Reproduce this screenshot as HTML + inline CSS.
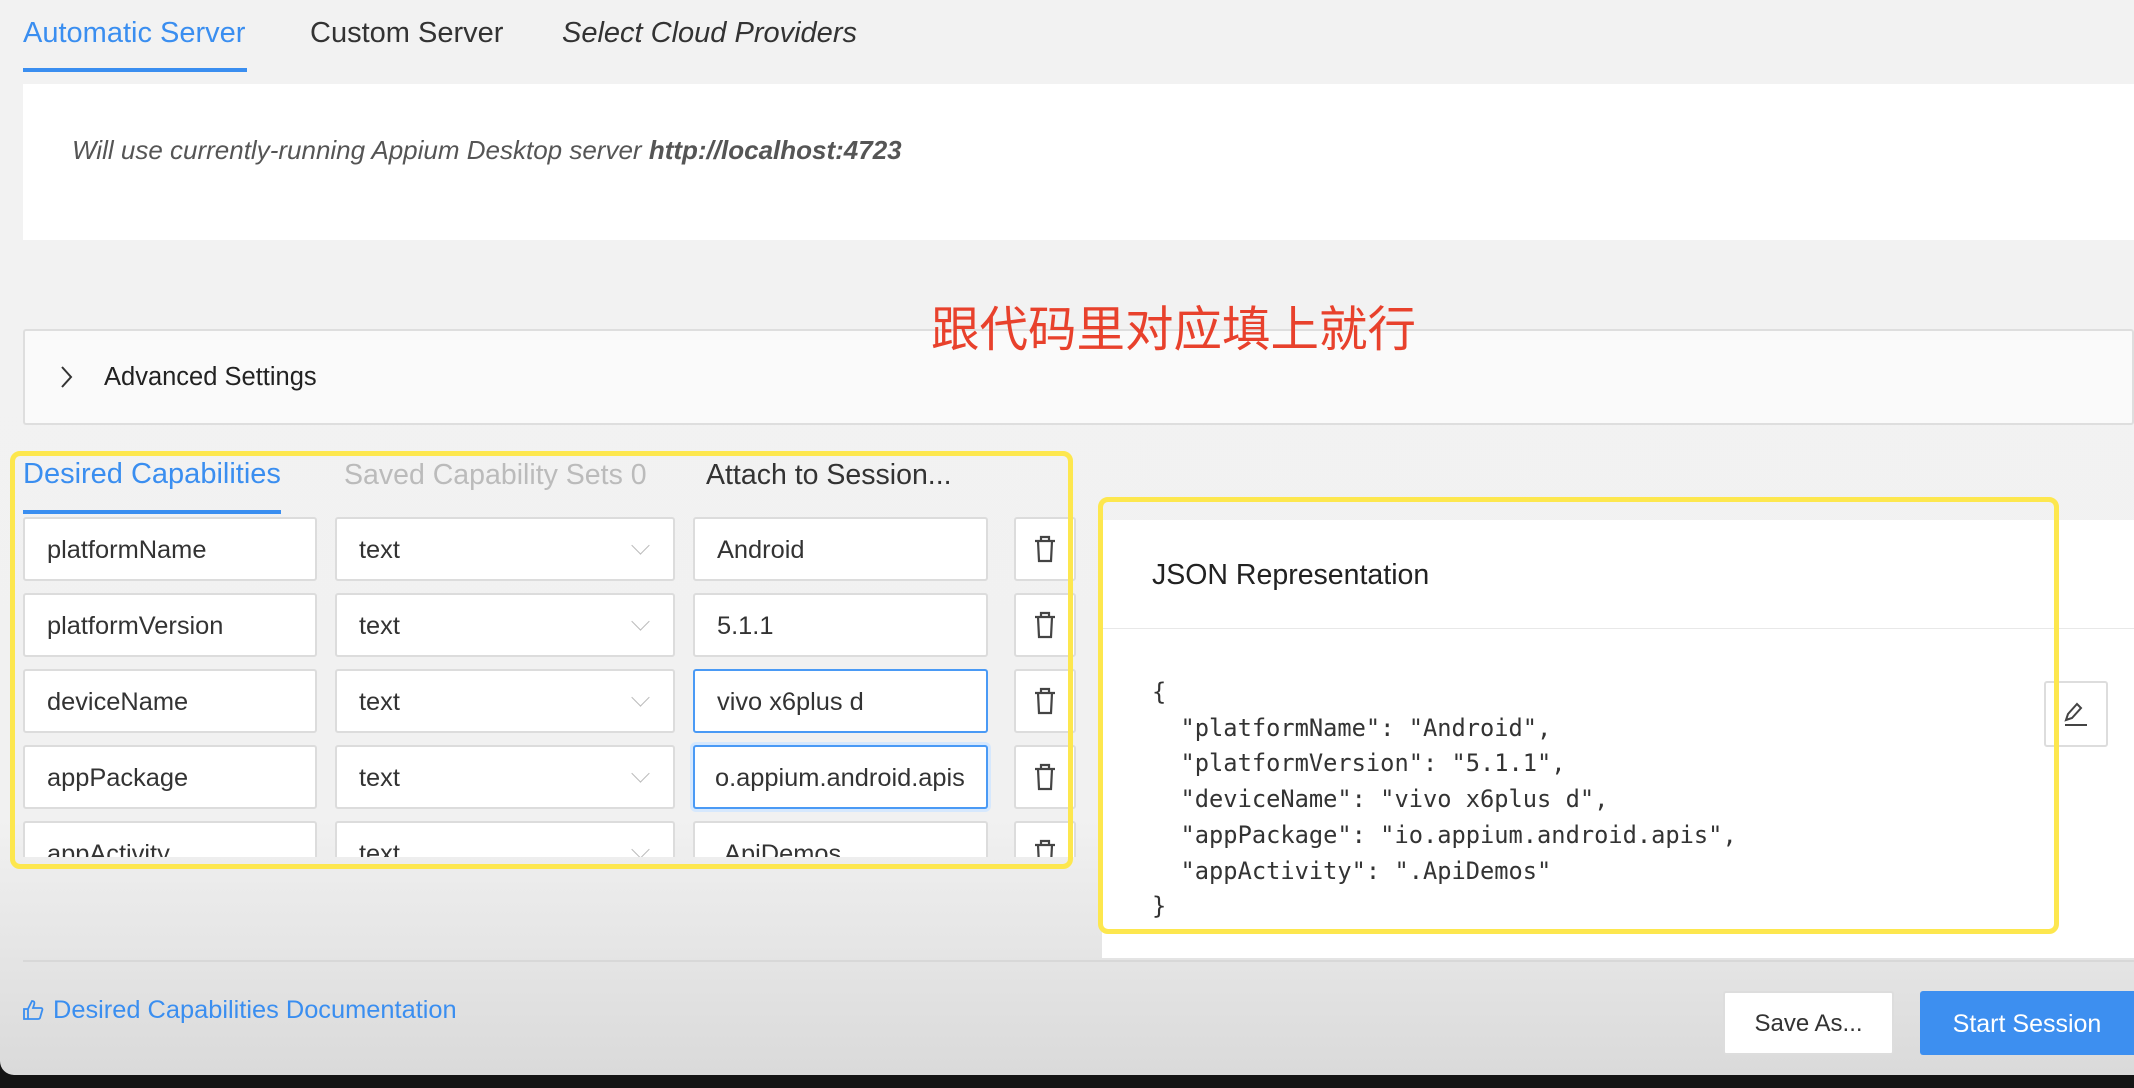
<!DOCTYPE html>
<html><head><meta charset="utf-8">
<style>
*{box-sizing:border-box;margin:0;padding:0}
body{width:2134px;height:1088px;overflow:hidden;background:#141414;font-family:"Liberation Sans","Noto Sans CJK SC",sans-serif;position:relative}
.app{position:absolute;left:0;top:0;width:2134px;height:1075px;background:linear-gradient(#f2f2f2 0,#f1f1f1 820px,#dadada 1075px);border-bottom-left-radius:14px;overflow:hidden}
.a{position:absolute;white-space:nowrap}
.tab{font-size:29px;color:#333;top:17px}
.box{position:absolute;background:#fff;border:1px solid #e4e4e4}
.inp{position:absolute;background:#fff;border:2px solid #dcdcdc;border-radius:3px;height:64px;font-size:25.4px;color:#333;padding-left:22px;line-height:62px;overflow:hidden;white-space:nowrap}
.sel::after{content:"";position:absolute;right:26px;top:20px;width:12px;height:12px;border-right:1.5px solid #bbb;border-bottom:1.5px solid #bbb;transform:rotate(45deg)}
.foc{border-color:#4a9af5}
.yel{position:absolute;border:5px solid #fde74e;border-radius:10px}
.code{font-family:"DejaVu Sans Mono","Liberation Mono",monospace;font-size:23.7px;color:#333;line-height:35.7px;white-space:pre}
</style></head><body>
<div class="app">
<div class="a tab" style="left:23px;color:#3a8ef0">Automatic Server</div>
<div style="position:absolute;left:23px;top:68px;width:224px;height:4px;background:#3a8ef0"></div>
<div class="a tab" style="left:310px">Custom Server</div>
<div class="a tab" style="left:562px;font-style:italic">Select Cloud Providers</div>
<div class="box" style="left:23px;top:84px;width:2111px;height:156px;border:none"></div>
<div class="a" style="left:72px;top:135px;font-size:26px;font-style:italic;color:#555">Will use currently-running Appium Desktop server <b>http://localhost:4723</b></div>
<div class="box" style="left:23px;top:329px;width:2111px;height:96px;background:#fafafa;border:2px solid #dedede;border-radius:3px"></div>
<svg style="position:absolute;left:60px;top:365px" width="14" height="24"><path d="M2 2 L11 12 L2 22" fill="none" stroke="#333" stroke-width="2"/></svg>
<div class="a" style="left:104px;top:363px;font-size:25.5px;color:#222">Advanced Settings</div>
<div class="a" style="left:931px;top:290px;font-size:48.5px;color:#e8412c;font-family:'Noto Sans CJK SC',sans-serif">跟代码里对应填上就行</div>

<div class="a" style="left:23px;top:458px;font-size:29px;color:#3a8ef0">Desired Capabilities</div>
<div style="position:absolute;left:23px;top:510px;width:258px;height:4px;background:#3a8ef0"></div>
<div class="a" style="left:344px;top:459px;font-size:28.5px;color:#bbb">Saved Capability Sets 0</div>
<div class="a" style="left:706px;top:459px;font-size:28.5px;color:#333">Attach to Session...</div>

<div style="position:absolute;left:0;top:517px;width:1090px;height:340px;overflow:hidden">
<div class="inp" style="left:23px;top:0;width:294px">platformName</div>
<div class="inp sel" style="left:335px;top:0;width:340px">text</div>
<div class="inp" style="left:693px;top:0;width:295px">Android</div>
<div class="inp" style="left:23px;top:76px;width:294px">platformVersion</div>
<div class="inp sel" style="left:335px;top:76px;width:340px">text</div>
<div class="inp" style="left:693px;top:76px;width:295px">5.1.1</div>
<div class="inp" style="left:23px;top:152px;width:294px">deviceName</div>
<div class="inp sel" style="left:335px;top:152px;width:340px">text</div>
<div class="inp foc" style="left:693px;top:152px;width:295px">vivo x6plus d</div>
<div class="inp" style="left:23px;top:228px;width:294px">appPackage</div>
<div class="inp sel" style="left:335px;top:228px;width:340px">text</div>
<div class="inp foc" style="left:693px;top:228px;width:295px;padding-left:20px;box-shadow:0 0 0 3px #d6e8fd">o.appium.android.apis</div>
<div class="inp" style="left:23px;top:304px;width:294px">appActivity</div>
<div class="inp sel" style="left:335px;top:304px;width:340px">text</div>
<div class="inp" style="left:693px;top:304px;width:295px">.ApiDemos</div>
<div class="inp" style="left:1014px;top:0;width:62px"></div>
<div class="inp" style="left:1014px;top:76px;width:62px"></div>
<div class="inp" style="left:1014px;top:152px;width:62px"></div>
<div class="inp" style="left:1014px;top:228px;width:62px"></div>
<div class="inp" style="left:1014px;top:304px;width:62px"></div>
<svg style="position:absolute;left:1032px;top:18px" width="26" height="330"><g fill="none" stroke="#444" stroke-width="2.2">
<path d="M3 6H23M9 6V2H17V6M6 6L7 26H19L20 6"/>
<path transform="translate(0,76)" d="M3 6H23M9 6V2H17V6M6 6L7 26H19L20 6"/>
<path transform="translate(0,152)" d="M3 6H23M9 6V2H17V6M6 6L7 26H19L20 6"/>
<path transform="translate(0,228)" d="M3 6H23M9 6V2H17V6M6 6L7 26H19L20 6"/>
<path transform="translate(0,304)" d="M3 6H23M9 6V2H17V6M6 6L7 26H19L20 6"/></g></svg>
</div>
<div class="yel" style="left:10px;top:451px;width:1063px;height:418px"></div>

<div class="box" style="left:1102px;top:520px;width:1040px;height:438px;border:none"></div>
<div style="position:absolute;left:1102px;top:628px;width:1032px;height:1px;background:#e8e8e8"></div>
<div class="a" style="left:1152px;top:559px;font-size:28.5px;color:#222">JSON Representation</div>
<div class="a code" style="left:1152px;top:675px">{
  "platformName": "Android",
  "platformVersion": "5.1.1",
  "deviceName": "vivo x6plus d",
  "appPackage": "io.appium.android.apis",
  "appActivity": ".ApiDemos"
}</div>
<div style="position:absolute;left:2044px;top:681px;width:64px;height:66px;background:#fff;border:2px solid #ddd;border-radius:3px"></div>
<svg style="position:absolute;left:2062px;top:700px" width="28" height="28"><g fill="none" stroke="#444" stroke-width="2"><path d="M4 20L6 14L15 4L19 8L10 18Z"/><path d="M3 25H25"/></g></svg>
<div class="yel" style="left:1098px;top:497px;width:961px;height:437px"></div>

<div style="position:absolute;left:23px;top:960px;width:2111px;height:2px;background:#d8d8d8"></div>
<svg style="position:absolute;left:22px;top:999px" width="22" height="22"><path d="M2 10H6V20H2Z M6 10L10 2C12 2 13 3 12 6L11 9H19C20 9 21 10 20 12L18 19C17.5 20 17 20 16 20H6" fill="none" stroke="#3a8ef0" stroke-width="1.8"/></svg>
<div class="a" style="left:53px;top:996px;font-size:25.4px;color:#3a8ef0">Desired Capabilities Documentation</div>
<div style="position:absolute;left:1723px;top:991px;width:171px;height:64px;background:#fff;border:2px solid #ddd;border-radius:3px;font-size:24px;color:#333;text-align:center;line-height:62px">Save As...</div>
<div style="position:absolute;left:1920px;top:991px;width:214px;height:64px;background:#3d8ff0;border-radius:3px 0 0 3px;font-size:25px;color:#fff;text-align:center;line-height:66px">Start Session</div>
</div>
</body></html>
